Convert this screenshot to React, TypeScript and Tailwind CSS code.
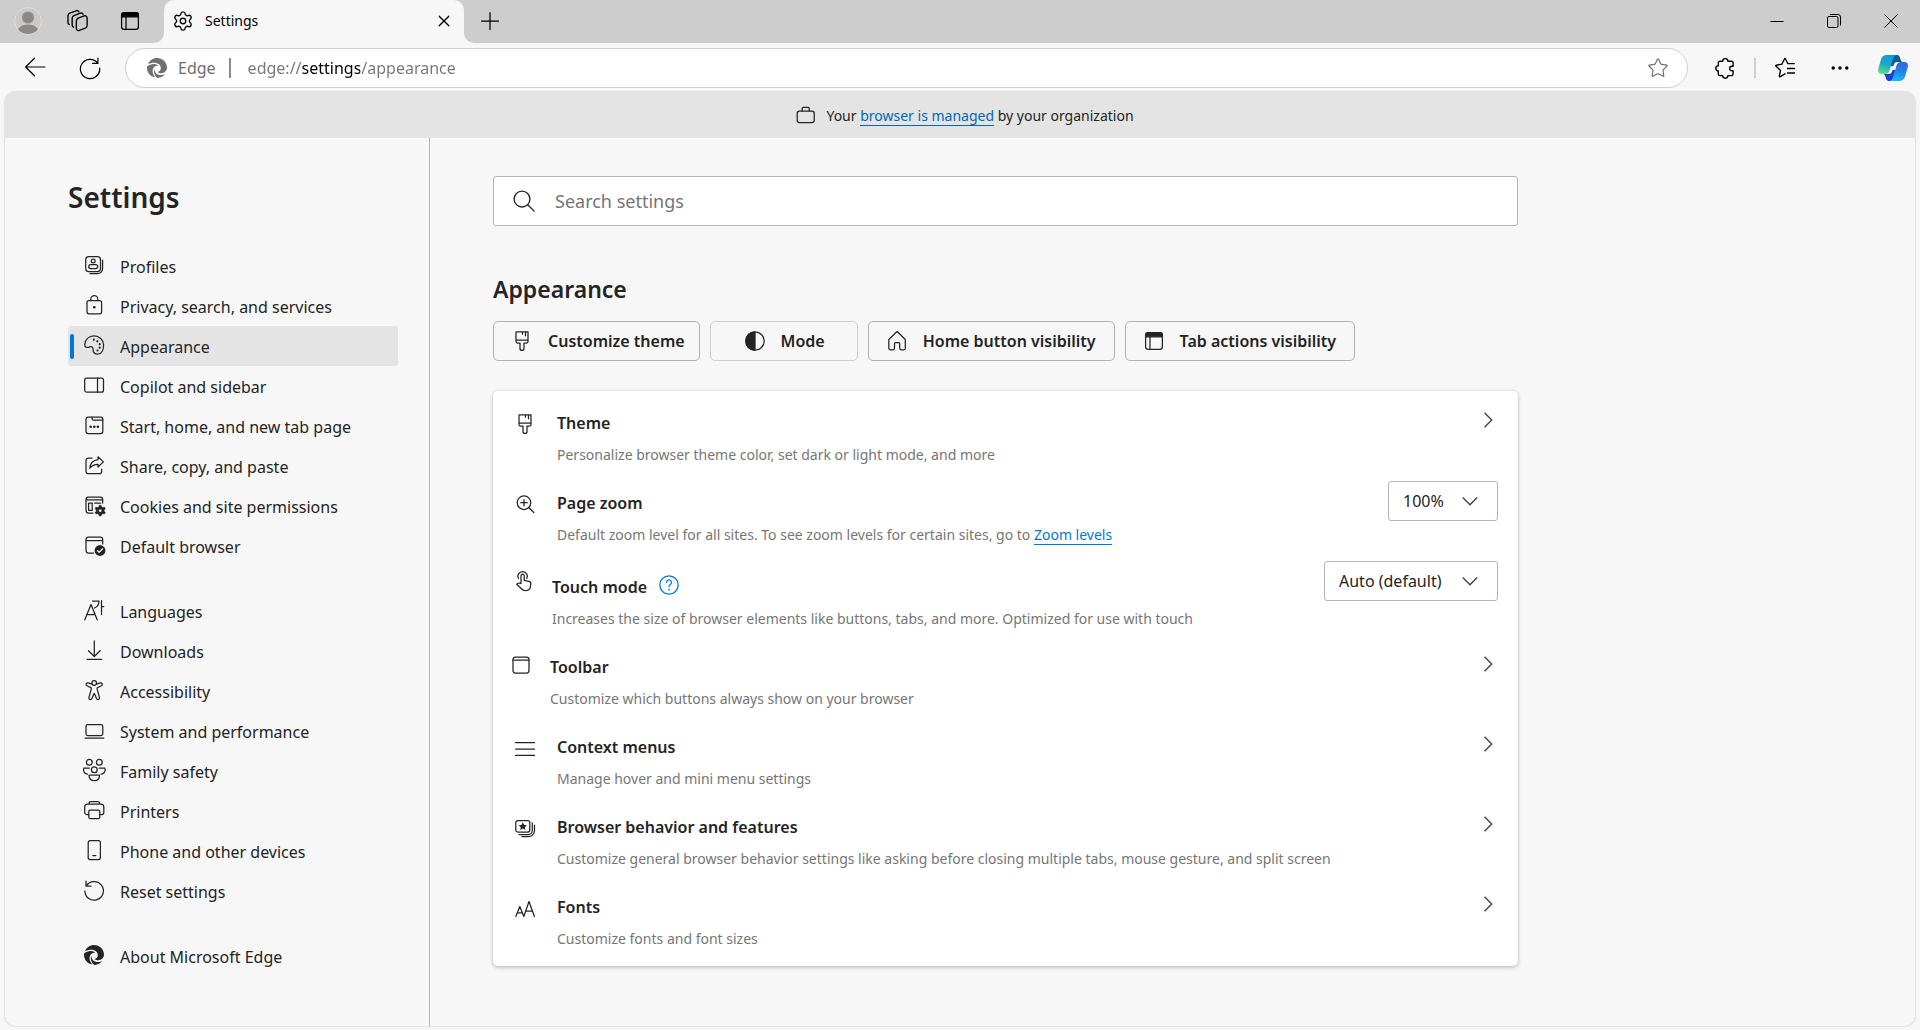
import type { ReactNode } from 'react';
import { Settings as GearIcon, Star } from 'lucide-react';

type IconProps = { children: ReactNode; className?: string };

function Icon({ children, className = 'size-5' }: IconProps) {
  return (
    <svg
      viewBox="0 0 20 20"
      fill="none"
      stroke="currentColor"
      strokeWidth="1.25"
      strokeLinecap="round"
      strokeLinejoin="round"
      aria-hidden="true"
      className={`shrink-0 overflow-visible ${className}`}
    >
      {children}
    </svg>
  );
}

const solid = { fill: 'currentColor', stroke: 'none' };

function EdgeMark({ className = 'size-5' }: { className?: string }) {
  return (
    <svg viewBox="0 0 20 20" fill="currentColor" aria-hidden="true" className={`shrink-0 ${className}`}>
      <path d="M.9 6.2C2.4 2.5 6 0 10 0c5.600 0 10 4.300 10 9.600 0 3.300-2.500 5.700-5.800 5.700-1.500 0-2.900-.5-3.700-1.300 2-.4 3.300-1.900 3.300-3.800C13.800 7 11 4.700 7.300 4.700c-2.500 0-4.800.5-6.400 1.500Z" />
      <path d="M.1 8.600C1.800 6.700 4.600 5.900 7.300 6c1.600.1 2.900.7 3.900 1.700C8 7.400 5.600 9.700 5.600 12.900c0 2.400 1 4.700 2.800 6.600C3.700 18.800 0 14.700 0 10c0-.5 0-1 .1-1.400Z" />
      <path d="M7.500 10.500c-.4 3.700 2.300 6.600 6.300 6.600 1.700 0 3.400-.5 4.700-1.500-1.700 2.700-4.700 4.400-8.100 4.400-2.200-1.500-3.500-4-3.500-6.600 0-1.100.2-2.100.6-2.900Z" />
    </svg>
  );
}

const brush = (
  <>
    <path d="M4 .8h12v9.700a1.500 1.500 0 0 1-1.500 1.500H12v5.400a2 2 0 0 1-4 0V12H5.500A1.500 1.500 0 0 1 4 10.500ZM4 9h12M10.500.8v2.400M13.500.8v4" />
  </>
);

const tabActions = (
  <>
    <rect x="1.600" y="1.600" width="16.800" height="16.800" rx="2.600" />
    <path d="M1.600 4.200a2.600 2.600 0 0 1 2.600-2.600h11.600a2.600 2.600 0 0 1 2.600 2.600v1.600H1.600Z" fill="currentColor" />
    <path d="M6 6v12.400" />
  </>
);

type NavItem = { label: string; icon: ReactNode };

const navGroups: NavItem[][] = [
  [
    {
      label: 'Profiles',
      icon: (
        <Icon>
          <rect x="1.700" y="1.700" width="14.800" height="14.800" rx="3" />
          <circle cx="9.200" cy="6" r="1.900" />
          <rect x="4.700" y="9.600" width="9" height="4" rx="2" />
          <path d="M18.600 5v8.600a5 5 0 0 1-5 5H6" />
        </Icon>
      ),
    },
    {
      label: 'Privacy, search, and services',
      icon: (
        <Icon>
          <rect x="3" y="5.600" width="14.600" height="13.200" rx="2" />
          <path d="M6.800 5.600V4.200a3.500 3.500 0 0 1 7 0v1.400" />
          <circle cx="10.300" cy="12.200" r="1.300" {...solid} />
        </Icon>
      ),
    },
    {
      label: 'Appearance',
      icon: (
        <Icon>
          <path d="M10 .8c5.200 0 9.600 4 9.600 9.200 0 5-2 9.200-5.900 9.200-3.300 0-4.700-2.200-4.600-4.800.1-2.300-1.400-3.300-3.300-2.500C3.200 13 .7 12.700.7 9.500.7 4.800 5 .8 10 .8Z" />
          <circle cx="9.800" cy="4.700" r="1.100" {...solid} />
          <circle cx="13.300" cy="6.300" r="1.100" {...solid} />
          <circle cx="15.700" cy="9.200" r="1.100" {...solid} />
          <circle cx="15.700" cy="12.700" r="1.100" {...solid} />
          <circle cx="13.500" cy="15.500" r="1.100" {...solid} />
        </Icon>
      ),
    },
    {
      label: 'Copilot and sidebar',
      icon: (
        <Icon>
          <rect x=".7" y="3" width="18.800" height="14.200" rx="2" />
          <path d="M13.500 3v14.200" />
        </Icon>
      ),
    },
    {
      label: 'Start, home, and new tab page',
      icon: (
        <Icon>
          <rect x="2" y="2" width="16.800" height="16.600" rx="2.400" />
          <path d="M8 2v1.500A1.500 1.500 0 0 0 9.500 5h9.300" />
          <circle cx="6.700" cy="11.700" r="1.300" {...solid} />
          <circle cx="10.300" cy="11.700" r="1.300" {...solid} />
          <circle cx="13.900" cy="11.700" r="1.300" {...solid} />
        </Icon>
      ),
    },
    {
      label: 'Share, copy, and paste',
      icon: (
        <Icon>
          <path d="M8 3H4.500A2.500 2.500 0 0 0 2 5.500v10.700a2.500 2.500 0 0 0 2.500 2.500h10.700a2.500 2.500 0 0 0 2.500-2.500v-2" />
          <path d="M14 1.800 19.400 6.900 14 12V9.300C10.500 9.200 8 10.500 5.800 13.200 6.200 8.700 9 5.200 14 4.600Z" />
        </Icon>
      ),
    },
    {
      label: 'Cookies and site permissions',
      icon: (
        <Icon>
          <path d="M9 18H4.500A2.500 2.500 0 0 1 2 15.500v-11A2.500 2.500 0 0 1 4.500 2h11.700a2.500 2.500 0 0 1 2.500 2.500V8M2 4.800h16.700M10.700 8.200h6" />
          <rect x="4.600" y="8" width="3.600" height="7.400" />
          <path
            d="m15.300 10.200 1.800 0 .5 1.600 1.300.7 1.600-.4.9 1.600-1.200 1.200v1.400l1.200 1.200-.9 1.600-1.600-.4-1.300.7-.5 1.600h-1.800l-.5-1.600-1.300-.7-1.600.4-.9-1.600 1.200-1.200v-1.400l-1.200-1.200.9-1.600 1.600.4 1.300-.7ZM16.200 14a1.600 1.600 0 1 0 0 3.200 1.600 1.600 0 0 0 0-3.200Z"
            fillRule="evenodd"
            fill="currentColor"
            strokeWidth=".4"
          />
        </Icon>
      ),
    },
    {
      label: 'Default browser',
      icon: (
        <Icon>
          <path d="M9.500 18H4.500A2.500 2.500 0 0 1 2 15.500v-11A2.500 2.500 0 0 1 4.500 2h11.700a2.500 2.500 0 0 1 2.500 2.500V9M2 5.500h16.700" />
          <circle cx="16" cy="15.500" r="5.400" {...solid} />
          <path d="m13.500 15.700 1.700 1.700 3.400-3.600" stroke="#f7f7f7" />
        </Icon>
      ),
    },
  ],
  [
    {
      label: 'Languages',
      icon: (
        <Icon>
          <path d="M.8 19.800 7 4.500l6.200 15.300M3 14.500h8M8.500 1H15c0 3.500-1.500 5.800-4.500 7M17.500.6v14M17.500 6.500h2.200" />
        </Icon>
      ),
    },
    {
      label: 'Downloads',
      icon: (
        <Icon>
          <path d="M10.300.8v15.500M4.500 10.700l5.800 5.800 5.800-5.800M3 19.300h14.600" />
        </Icon>
      ),
    },
    {
      label: 'Accessibility',
      icon: (
        <Icon>
          <circle cx="10.200" cy="3" r="2.300" />
          <path d="M7.900 4.200 4.200 2.900C2.300 2.300 1.200 5 3 5.800l3.800 1.800c.5.300.6.700.5 1.200L4.900 17.600c-.4 1.900 2.200 2.700 3 1l2-4.900c.1-.3.500-.3.600 0l2 4.900c.8 1.700 3.400.9 3-1l-2.400-8.800c-.1-.5 0-.9.500-1.200l3.800-1.800c1.800-.8.7-3.500-1.200-2.900l-3.700 1.300" />
        </Icon>
      ),
    },
    {
      label: 'System and performance',
      icon: (
        <Icon>
          <rect x="2" y="4.600" width="16.800" height="11" rx="1.800" />
          <path d="M1 18h18.800" />
        </Icon>
      ),
    },
    {
      label: 'Family safety',
      icon: (
        <Icon>
          <circle cx="5.300" cy="2.200" r="2.900" />
          <circle cx="15.300" cy="2.200" r="2.900" />
          <circle cx="10.300" cy="9.700" r="2.900" />
          <path d="M5.300 8H-.2c-1.200 3 .8 6 3.700 6M15.300 8h5.500c1.200 3-.8 6-3.700 6M5 15h10.600c0 3.500-1.900 5.700-5.300 5.700S5 18.500 5 15Z" />
        </Icon>
      ),
    },
    {
      label: 'Printers',
      icon: (
        <Icon>
          <path d="M4.800 14.500H2.700a2 2 0 0 1-2-2V7a3 3 0 0 1 3-3h13.100a3 3 0 0 1 3 3v5.500a2 2 0 0 1-2 2h-2.100M5 4V3.500A1.800 1.800 0 0 1 6.800 1.700h7a1.800 1.800 0 0 1 1.800 1.800V4" />
          <rect x="4.800" y="10" width="11" height="8.600" rx="1.600" />
        </Icon>
      ),
    },
    {
      label: 'Phone and other devices',
      icon: (
        <Icon>
          <rect x="4.200" y=".7" width="12.200" height="18.800" rx="2" />
          <path d="M8.800 15.500h3" />
        </Icon>
      ),
    },
    {
      label: 'Reset settings',
      icon: (
        <Icon>
          <path d="M2 1v5h5M2.400 5.600A9.300 9.300 0 1 1 .8 11" />
        </Icon>
      ),
    },
  ],
  [{ label: 'About Microsoft Edge', icon: <EdgeMark /> }],
];

const quickActions = [
  { label: 'Customize theme', icon: brush, style: 'pl-[18px] pr-3.5 border-[#b1b1b1]' },
  {
    label: 'Mode',
    icon: (
      <>
        <circle cx="10" cy="10" r="9.200" />
        <path d="M10 .8a9.200 9.200 0 0 0 0 18.400Z" fill="currentColor" />
      </>
    ),
    style: 'pl-[34px] pr-8 border-[#cfcfcf]',
  },
  {
    label: 'Home button visibility',
    icon: (
      <path d="M1.800 8.500 9.200 1.200a1.300 1.300 0 0 1 1.800 0l7.300 7.300v8.800A1.500 1.500 0 0 1 16.800 18.800h-2.600a1.500 1.500 0 0 1-1.500-1.500V12.500a1 1 0 0 0-1-1H8.500a1 1 0 0 0-1 1v4.800A1.500 1.500 0 0 1 6 18.800H3.300a1.500 1.500 0 0 1-1.500-1.500Z" />
    ),
    style: 'pl-[18px] pr-[18px] border-[#b1b1b1]',
  },
  { label: 'Tab actions visibility', icon: tabActions, style: 'pl-[18px] pr-[18px] border-[#b1b1b1]' },
];

function Chevron({ className }: { className: string }) {
  return (
    <svg
      viewBox="0 0 16 16"
      fill="none"
      stroke="#444"
      strokeWidth="1.400"
      aria-hidden="true"
      className={`size-4 ${className}`}
    >
      <path d="M4.500.8 11.700 8l-7.200 7.200" />
    </svg>
  );
}

type RowProps = {
  icon: ReactNode;
  title: string;
  children: ReactNode;
  pad?: string;
  iconTop?: string;
  top?: string;
  help?: boolean;
  select?: { value: string; width: string; options: string[] };
};

function Row({
  icon,
  title,
  children,
  pad = 'pl-[22px] gap-[22px]',
  iconTop = 'pt-[17px]',
  top = 'pt-3.5',
  help = false,
  select,
}: RowProps) {
  const id = title.toLowerCase().replace(/\s+/g, '-');
  return (
    <section className={`flex items-start pr-5 ${pad}`}>
      <div className={iconTop}>
        <Icon>{icon}</Icon>
      </div>
      <div className={`min-w-0 flex-1 pb-3 ${top}`}>
        <div className="flex items-center gap-3">
          <h3 id={id} className="text-base leading-6 font-semibold">
            {title}
          </h3>
          {help && (
            <button type="button" aria-label="More about touch mode" className="mb-1 text-[#0078d4]">
              <Icon>
                <circle cx="10" cy="10" r="9.200" />
                <path d="M7.500 7.500a2.500 2.500 0 1 1 3.900 2c-.9.700-1.400 1.200-1.400 2.300" />
                <circle cx="10" cy="14.600" r=".9" {...solid} />
              </Icon>
            </button>
          )}
        </div>
        <p className="mt-2.5 text-sm leading-5 text-[#767676]">{children}</p>
      </div>
      {select ? (
        <div className={`relative mt-1 ${select.width}`}>
          <select
            aria-labelledby={id}
            defaultValue={select.value}
            className="h-10 w-full appearance-none rounded-[3px] border border-[#b5b5b5] bg-white pl-3.5 text-base"
          >
            {select.options.map((option) => (
              <option key={option}>{option}</option>
            ))}
          </select>
          <Chevron className="pointer-events-none absolute top-3 right-5 rotate-90" />
        </div>
      ) : (
        <button type="button" aria-label={`Open ${title}`} className="mt-[15px]">
          <Chevron className="mr-0.5" />
        </button>
      )}
    </section>
  );
}

function TitleBar() {
  return (
    <header className="flex h-[43px] items-stretch bg-[#cdcdcd] text-black">
      <div className="flex w-[164px] shrink-0 items-center pb-0.5 pl-3.5">
        <button type="button" aria-label="Profile" className="shrink-0">
          <svg viewBox="0 0 28 28" className="size-7" aria-hidden="true">
            <defs>
              <clipPath id="avatar">
                <circle cx="14" cy="14" r="13" />
              </clipPath>
            </defs>
            <circle cx="14" cy="14" r="13.400" fill="#cbc9c7" stroke="#e2e0de" strokeWidth="1" />
            <circle cx="14" cy="10.500" r="6" fill="#8b8886" />
            <ellipse cx="14" cy="24.500" rx="10.500" ry="7" fill="#8b8886" clipPath="url(#avatar)" />
          </svg>
        </button>
        <button type="button" aria-label="Workspaces" className="ml-[25px]">
          <Icon className="size-[22px]">
            <path d="M9.500 7.600 15.600 5.400a2 2 0 0 1 2.700 1.900v6.900a2.500 2.500 0 0 1-1.600 2.300l-5.500 2.100a2 2 0 0 1-2.700-1.900V9.900a2.500 2.500 0 0 1 1.600-2.300ZM6 15.600a2 2 0 0 1-1.300-1.900V7.400a2.500 2.500 0 0 1 1.600-2.300l5.800-2.200a2 2 0 0 1 2.500 1M2.200 13.300A2 2 0 0 1 .9 11.400V5.200a2.500 2.500 0 0 1 1.600-2.300L8.300.7a2 2 0 0 1 2.500 1" />
          </Icon>
        </button>
        <button type="button" aria-label="Tab actions" className="ml-[31px]">
          <Icon>{tabActions}</Icon>
        </button>
      </div>

      <div className="relative flex w-[300px] items-center rounded-t-[10px] bg-[#f7f7f7] pb-0.5 pl-2">
        <svg viewBox="0 0 10 10" className="absolute bottom-0 -left-2.5 size-2.5" aria-hidden="true">
          <path d="M10 0v10H0A10 10 0 0 0 10 0Z" fill="#f7f7f7" />
        </svg>
        <svg viewBox="0 0 10 10" className="absolute -right-2.5 bottom-0 size-2.5" aria-hidden="true">
          <path d="M0 0v10h10A10 10 0 0 1 0 0Z" fill="#f7f7f7" />
        </svg>
        <GearIcon className="size-[22px]" strokeWidth={1.5} aria-hidden="true" />
        <span className="ml-[11px] flex-1 text-sm">Settings</span>
        <button type="button" aria-label="Close tab" className="mr-3">
          <Icon className="size-4">
            <path d="m4 4 12 12M16 4 4 16" strokeWidth="1.700" />
          </Icon>
        </button>
      </div>
      <button type="button" aria-label="New tab" className="ml-4 pb-0.5">
        <Icon>
          <path d="M10 1.500v17M1.500 10h17" />
        </Icon>
      </button>

      <div className="ml-auto flex pb-px">
        <button type="button" aria-label="Minimize" className="grid w-[57px] place-items-center">
          <svg viewBox="0 0 14 14" className="size-3.5" stroke="currentColor" aria-hidden="true">
            <path d="M.5 7.500h13" />
          </svg>
        </button>
        <button type="button" aria-label="Restore" className="grid w-[57px] place-items-center">
          <svg viewBox="0 0 14 14" className="size-3.5" fill="none" stroke="currentColor" aria-hidden="true">
            <rect x=".5" y="2.500" width="10.500" height="11" rx="1.500" />
            <path d="M3 .5h8A2.500 2.500 0 0 1 13.500 3v8.500" />
          </svg>
        </button>
        <button type="button" aria-label="Close window" className="grid w-[58px] place-items-center">
          <svg viewBox="0 0 14 14" className="size-3.5" fill="none" stroke="currentColor" aria-hidden="true">
            <path d="m.5.5 13 13M13.500.5l-13 13" />
          </svg>
        </button>
      </div>
    </header>
  );
}

function CopilotMark() {
  return (
    <svg viewBox="0 0 30 26" className="h-[26px] w-[30px]" aria-hidden="true">
      <defs>
        <linearGradient id="leaf-a" x1=".6" y1="0" x2=".3" y2="1">
          <stop offset="0" stopColor="#0f9ad6" />
          <stop offset=".5" stopColor="#1aa9c8" />
          <stop offset="1" stopColor="#66dd88" />
        </linearGradient>
        <linearGradient id="leaf-b" x1=".6" y1="0" x2=".4" y2="1">
          <stop offset="0" stopColor="#3566d8" />
          <stop offset=".5" stopColor="#2484ea" />
          <stop offset="1" stopColor="#18b8ff" />
        </linearGradient>
      </defs>
      <path d="M14 0h5c2.500 0 3 2.500 3.700 5 .4 1.500 1.300 2 3.300 2h-7c-1.700 0-2.500.8-3 2.500L15.300 11H12Z" fill="#0b5c92" />
      <path d="M16 26h-5c-2.500 0-3-2.500-3.700-5-.4-1.500-1.300-2-3.300-2h7c1.700 0 2.500-.8 3-2.500L14.700 15H18Z" fill="#1c3fd6" />
      <path
        d="M8.700 0h9.600c-2.300.8-3.100 3-3.900 5.800L11.700 15c-.8 2.700-2.200 4-4.900 4H3.500C.4 19-.5 16.600.3 13.500L3 4.500C3.900 1.600 5.700 0 8.700 0Z"
        fill="url(#leaf-a)"
      />
      <path
        d="M21.300 26h-9.600c2.300-.8 3.100-3 3.900-5.800l2.700-9.200c.8-2.700 2.200-4 4.900-4h3.300c3.100 0 4 2.400 3.200 5.500l-2.700 9c-.9 2.900-2.700 4.500-5.700 4.500Z"
        fill="url(#leaf-b)"
      />
    </svg>
  );
}

function Toolbar() {
  return (
    <div className="flex h-[49px] items-center pr-3 pl-6 text-black">
      <button type="button" aria-label="Back" className="pb-px">
        <Icon className="size-[22px]">
          <path d="M19 10H1.500M9.500 2l-8 8 8 8" strokeWidth="1.100" />
        </Icon>
      </button>
      <button type="button" aria-label="Refresh" className="ml-[33px]">
        <Icon className="size-[22px]">
          <path d="M17.200 1v4.800h-4.800M17 5.500A8.800 8.800 0 1 0 18.800 10" strokeWidth="1.100" />
        </Icon>
      </button>
      <div className="ml-6 flex h-10 flex-1 items-center rounded-full border border-[#cfcfcf] bg-white pr-[18px] pl-[21px] text-[#6f6f6f]">
        <EdgeMark />
        <span className="ml-[11px] text-base">Edge</span>
        <span className="ml-[13px] h-5 w-0.5 bg-[#8a8a8a]" />
        <input
          type="text"
          aria-label="Address"
          defaultValue="edge://settings/appearance"
          className="ml-[17px] min-w-0 flex-1 bg-[linear-gradient(90deg,#767676_54px,#000_54px,#000_112px,#767676_112px)] bg-clip-text text-base text-transparent outline-none"
        />
        <button type="button" aria-label="Add to favorites">
          <Star className="size-[22px]" strokeWidth={1.3} aria-hidden="true" />
        </button>
      </div>
      <button type="button" aria-label="Extensions" className="ml-[27px]">
        <Icon>
          <path
            d="M7.700 3.200a2.600 2.600 0 0 1 5.200 0h3.500a1.700 1.700 0 0 1 1.700 1.700v3.300h-1.200a2.300 2.300 0 0 0 0 4.600h1.200v3.100a1.700 1.700 0 0 1-1.700 1.700h-3.500a2.600 2.600 0 0 1-5.200 0H5a1.700 1.700 0 0 1-1.700-1.700v-3a2.500 2.500 0 0 1 0-5V4.900A1.700 1.700 0 0 1 5 3.200Z"
            strokeWidth="1.400"
          />
        </Icon>
      </button>
      <span className="ml-[19px] h-5 w-0.5 bg-[#cfcfcf]" />
      <button type="button" aria-label="Favorites" className="ml-[19px]">
        <Icon>
          <path
            d="M5.500 12.400.9 8a.5.5 0 0 1 .3-.9l5.600-.8L9.500 1a.5.5 0 0 1 1 0l2.400 4.600h6.400M12.500 10.500h7M12.500 15h7M10 15.800l-5 3a.5.5 0 0 1-.7-.5l1.200-5.900"
            strokeWidth="1.400"
          />
        </Icon>
      </button>
      <button type="button" aria-label="Settings and more" className="ml-[35px]">
        <Icon>
          <circle cx="3.200" cy="10" r="1.700" {...solid} />
          <circle cx="10" cy="10" r="1.700" {...solid} />
          <circle cx="16.800" cy="10" r="1.700" {...solid} />
        </Icon>
      </button>
      <button type="button" aria-label="Copilot" className="ml-7">
        <CopilotMark />
      </button>
    </div>
  );
}

function Sidebar() {
  return (
    <aside className="w-[425px] shrink-0 border-r border-[#b5b5b5] pr-[31px] pl-[63px]">
      <h1 className="mt-[39px] text-[28px] leading-10 font-semibold">Settings</h1>
      <nav aria-label="Settings sections" className="mt-[29px] flex flex-col gap-[25px]">
        {navGroups.map((group) => (
          <ul key={group[0].label}>
            {group.map((item) => {
              const active = item.label === 'Appearance';
              return (
                <li key={item.label}>
                  <a
                    href="#"
                    aria-current={active ? 'page' : undefined}
                    className={`flex h-10 items-center rounded-[3px] pr-2 pl-0.5 text-base ${active ? 'bg-[#e4e4e4]' : ''}`}
                  >
                    <span className={`mr-2.5 h-[25px] w-1 rounded-xs ${active ? 'bg-[#0078d4]' : ''}`} />
                    <span className="pb-0.5">{item.icon}</span>
                    <span className="ml-4 pt-px">{item.label}</span>
                  </a>
                </li>
              );
            })}
          </ul>
        ))}
      </nav>
    </aside>
  );
}

function AppearancePage() {
  return (
    <main className="min-w-0 flex-1 pt-[38px] pr-6 pl-[63px]">
      <div className="w-full max-w-[1025px]">
        <label className="flex h-[50px] items-center gap-5 rounded-[3px] border border-[#b5b5b5] bg-white pr-4 pl-[19px]">
          <Icon className="size-[22px]">
            <circle cx="8.200" cy="8.200" r="7.200" />
            <path d="m13.400 13.400 5.800 5.800" />
          </Icon>
          <input
            type="search"
            aria-label="Search settings"
            placeholder="Search settings"
            className="min-w-0 flex-1 text-lg outline-none placeholder:text-[#767676]"
          />
        </label>

        <h2 className="mt-[47px] text-[23px] leading-8 font-semibold">Appearance</h2>
        <div className="mt-4 flex flex-wrap gap-2.5">
          {quickActions.map((action) => (
            <button
              key={action.label}
              type="button"
              className={`flex h-10 items-center gap-4 rounded-[5px] border text-base font-semibold ${action.style}`}
            >
              <Icon>{action.icon}</Icon>
              {action.label}
            </button>
          ))}
        </div>

        <div className="mt-[30px] rounded-[5px] bg-white pt-1.5 pb-[5px] shadow-[0_2px_4px_rgba(0,0,0,0.18),0_0_3px_rgba(0,0,0,0.14)]">
          <Row icon={brush} title="Theme">
            Personalize browser theme color, set dark or light mode, and more
          </Row>
          <Row
            icon={
              <>
                <circle cx="9" cy="8.700" r="6.800" />
                <path d="m14 13.700 4.800 4.800M9 5.500v6.400M5.800 8.700h6.400" />
              </>
            }
            title="Page zoom"
            select={{ value: '100%', width: 'w-[110px]', options: ['75%', '100%', '125%'] }}
          >
            Default zoom level for all sites. To see zoom levels for certain sites, go to{' '}
            <a href="#" className="border-b border-[#0078d4] text-[#0078d4]">
              Zoom levels
            </a>
          </Row>
          <Row
            icon={
              <path d="M8 12.500V4.800a1.600 1.600 0 0 1 3.200 0v4.500l4.800 1.100a2.300 2.300 0 0 1 1.800 2.600l-.5 3.200a4 4 0 0 1-4 3.300h-1.500a4 4 0 0 1-2.800-1.200l-5.300-5c.8-1.500 2.700-1.300 4.300-.8ZM5.300 7.500a4.800 4.800 0 1 1 8.600 0M8 12.500V10" />
            }
            title="Touch mode"
            pad="pl-5 gap-[19px]"
            iconTop="pt-3.5"
            top="pt-[18px]"
            help
            select={{ value: 'Auto (default)', width: 'w-[174px]', options: ['Auto (default)', 'Always on', 'Always off'] }}
          >
            Increases the size of browser elements like buttons, tabs, and more. Optimized for use with touch
          </Row>
          <Row
            icon={
              <>
                <rect x="2" y="2" width="16" height="16" rx="2.500" />
                <path d="M2 5.200h16" />
              </>
            }
            title="Toolbar"
            pad="pl-[18px] gap-[19px]"
            iconTop="pt-3.5"
          >
            Customize which buttons always show on your browser
          </Row>
          <Row icon={<path d="M.6 4.500h19M.6 11h19M.6 17.400h19" />} title="Context menus">
            Manage hover and mini menu settings
          </Row>
          <Row
            icon={
              <>
                <rect x=".8" y="2.600" width="14" height="11.400" rx="2" />
                <path d="M17.300 4.800v7.700a4 4 0 0 1-4 4H4M19.500 7v5.500a6.200 6.200 0 0 1-6.200 6.200H7" />
                <path d="m7.800 4.200 1.300 2.700 2.900.3-2.200 2 .6 2.900-2.600-1.500-2.600 1.500.6-2.900-2.200-2 2.900-.3Z" {...solid} />
              </>
            }
            title="Browser behavior and features"
          >
            Customize general browser behavior settings like asking before closing multiple tabs, mouse gesture, and
            split screen
          </Row>
          <Row
            icon={<path d="m.8 18.500 4-10 4 10M2.400 14.800h4.900M8.800 18.500 14 3.500l5.400 15M10.700 13.200h6.700" />}
            title="Fonts"
          >
            Customize fonts and font sizes
          </Row>
        </div>
      </div>
    </main>
  );
}

export default function App() {
  return (
    <div className="flex min-h-screen flex-col bg-[#f7f7f7] font-['Noto_Sans','Open_Sans',sans-serif] text-[#242424]">
      <TitleBar />
      <Toolbar />
      <div className="mx-[5px] mb-1 flex flex-1 flex-col overflow-hidden rounded-[10px] shadow-[0_0_2px_rgba(0,0,0,0.3)]">
        <div className="flex h-[46px] items-center justify-center gap-2.5 bg-[#e4e4e4] pt-0.5 pl-2.5 text-sm">
          <Icon>
            <rect x="1.200" y="5" width="17" height="11.500" rx="2.200" />
            <path d="M6.200 5V2.400a1 1 0 0 1 1-1h5a1 1 0 0 1 1 1V5" />
          </Icon>
          <p>
            Your{' '}
            <a href="#" className="border-b border-[#0067b8] text-[#0067b8]">
              browser is managed
            </a>{' '}
            by your organization
          </p>
        </div>
        <div className="flex flex-1">
          <Sidebar />
          <AppearancePage />
        </div>
      </div>
    </div>
  );
}
